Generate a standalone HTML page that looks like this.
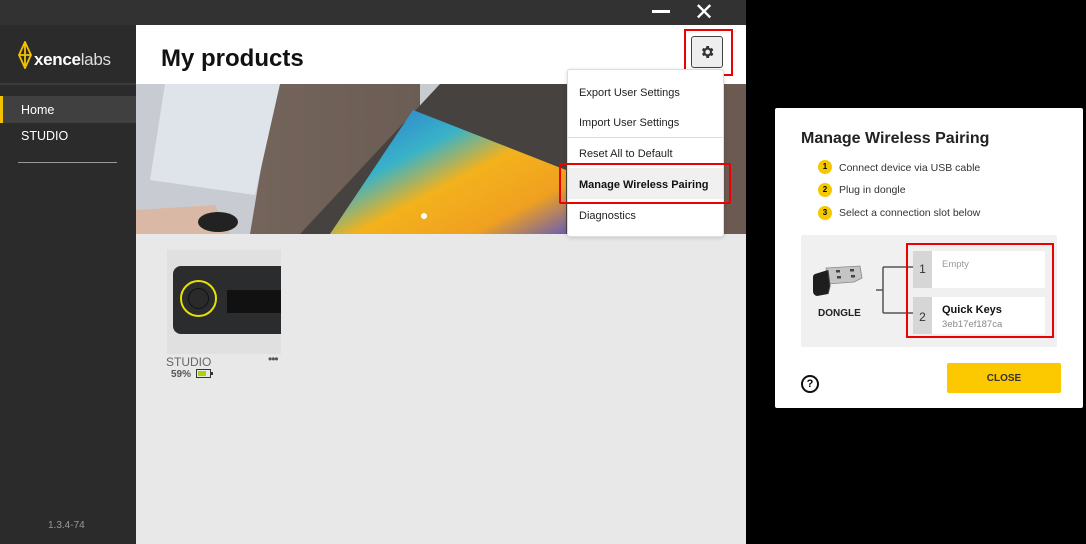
<!DOCTYPE html>
<html><head><meta charset="utf-8"><style>
*{margin:0;padding:0;box-sizing:border-box}
body{width:1086px;height:544px;background:#000;font-family:"Liberation Sans","DejaVu Sans",sans-serif;position:relative;overflow:hidden}
.abs{position:absolute}
</style></head><body>
<div class="abs" style="left:0;top:0;width:746px;height:544px;background:#2e2e2e"></div>
<div class="abs" style="left:0;top:0;width:746px;height:25px;background:#323232"></div>
<div class="abs" style="left:652px;top:10px;width:18px;height:3px;background:#fff"></div>
<div class="abs" style="left:694px;top:-2px;color:#fff;font-size:24px;font-weight:bold">✕</div>
<div class="abs" style="left:0;top:25px;width:136px;height:519px;background:#2b2b2b"></div>
<svg class="abs" style="left:17px;top:41px" width="16" height="28" viewBox="0 0 16 28"><path d="M8 1 L14 14 L8 27 L2 14 Z M8 1 L8 27 M2 14 L14 14" fill="none" stroke="#f2c200" stroke-width="1.8"/></svg>
<div class="abs" style="left:34px;top:50px;color:#fff;font-size:17px;letter-spacing:-0.3px"><b>xence</b><span style="color:#ddd">labs</span></div>
<div class="abs" style="left:0;top:83px;width:136px;height:2px;background:#3a3a3a"></div>
<div class="abs" style="left:0;top:96px;width:136px;height:27px;background:#404040"></div>
<div class="abs" style="left:0;top:96px;width:3px;height:27px;background:#f2c200"></div>
<div class="abs" style="left:21px;top:103px;color:#fff;font-size:12.5px">Home</div>
<div class="abs" style="left:21px;top:129px;color:#fff;font-size:12.5px">STUDIO</div>
<div class="abs" style="left:18px;top:162px;width:99px;height:1px;background:#999"></div>
<div class="abs" style="left:48px;top:520px;color:#999;font-size:10px">1.3.4-74</div>
<div class="abs" style="left:136px;top:25px;width:610px;height:519px;background:#e8e8e8"></div>
<div class="abs" style="left:136px;top:25px;width:610px;height:59px;background:#fff"></div>
<div class="abs" style="left:161px;top:45px;color:#111;font-size:24px;font-weight:bold">My products</div>
<svg class="abs" style="left:136px;top:84px" width="610" height="150" viewBox="136 84 610 150">
<defs>
<linearGradient id="wood" x1="0" y1="0" x2="1" y2="0"><stop offset="0" stop-color="#7a6a60"/><stop offset="1" stop-color="#5b4d47"/></linearGradient>
<linearGradient id="art" x1="0" y1="0" x2="1" y2="1"><stop offset="0" stop-color="#2a6fd0"/><stop offset="0.35" stop-color="#39b3c8"/><stop offset="0.55" stop-color="#f3b21c"/><stop offset="0.8" stop-color="#f0a020"/><stop offset="1" stop-color="#6a5fb0"/></linearGradient>
</defs>
<rect x="136" y="84" width="610" height="150" fill="url(#wood)"/>
<polygon points="136,84 275,84 250,234 136,234" fill="#c8ccd2"/>
<polygon points="165,84 280,84 255,195 150,180" fill="#dfe3ea"/>
<polygon points="136,210 215,205 230,234 136,234" fill="#d9b8a6"/>
<ellipse cx="218" cy="222" rx="20" ry="10" fill="#222"/>
<polygon points="420,84 480,84 475,125 420,120" fill="#c9cccf"/>
<polygon points="300,234 440,84 746,84 746,234" fill="#46423f"/>
<polygon points="330,234 413,110 566,170 566,234" fill="url(#art)"/>
<rect x="700" y="84" width="46" height="150" fill="#6b5a52"/>
<circle cx="424" cy="216" r="3" fill="#fff"/>
</svg>
<div class="abs" style="left:684px;top:29px;width:49px;height:47px;border:2px solid #e00"></div>
<div class="abs" style="left:691px;top:36px;width:32px;height:32px;border:1.5px solid #444;border-radius:3px;background:#eee"></div>
<svg class="abs" style="left:699px;top:44px" width="16" height="16" viewBox="0 0 24 24"><path fill="#333" d="M19.4 13a7.5 7.5 0 0 0 0-2l2.1-1.6-2-3.5-2.5 1a7.7 7.7 0 0 0-1.7-1L15 3h-4l-.4 2.9a7.7 7.7 0 0 0-1.7 1l-2.5-1-2 3.5L6.6 11a7.5 7.5 0 0 0 0 2l-2.1 1.6 2 3.5 2.5-1a7.7 7.7 0 0 0 1.7 1L11 21h4l.4-2.9a7.7 7.7 0 0 0 1.7-1l2.5 1 2-3.5zM13 15.5A3.5 3.5 0 1 1 13 8.5a3.5 3.5 0 0 1 0 7z"/></svg>
<div class="abs" style="left:567px;top:69px;width:157px;height:168px;background:#fff;border:1px solid #ddd;border-radius:3px;box-shadow:0 1px 4px rgba(0,0,0,.15)"></div>
<div class="abs" style="left:579px;top:87px;font-size:11px;color:#222">Export User Settings</div>
<div class="abs" style="left:579px;top:117px;font-size:11px;color:#222">Import User Settings</div>
<div class="abs" style="left:567px;top:137px;width:157px;height:1px;background:#ddd"></div>
<div class="abs" style="left:579px;top:148px;font-size:11px;color:#222">Reset All to Default</div>
<div class="abs" style="left:568px;top:168px;width:155px;height:31px;background:#f0f0f0"></div>
<div class="abs" style="left:579px;top:179px;font-size:11px;color:#111;font-weight:bold">Manage Wireless Pairing</div>
<div class="abs" style="left:559px;top:163px;width:172px;height:41px;border:2px solid #e00;border-radius:2px"></div>
<div class="abs" style="left:579px;top:210px;font-size:11px;color:#222">Diagnostics</div>
<div class="abs" style="left:167px;top:250px;width:114px;height:104px;background:#e0e0e0"></div>
<div class="abs" style="left:173px;top:266px;width:108px;height:68px;background:#2a2c2e;border-radius:8px 0 0 8px"></div>
<div class="abs" style="left:180px;top:280px;width:37px;height:37px;border:2px solid #e8e000;border-radius:50%"></div>
<div class="abs" style="left:188px;top:288px;width:21px;height:21px;border:1px solid #111;border-radius:50%;background:#2a2a2a"></div>
<div class="abs" style="left:227px;top:290px;width:54px;height:23px;background:#111"></div>
<div class="abs" style="left:166px;top:355px;font-size:12px;color:#666">STUDIO</div>
<div class="abs" style="left:268px;top:352px;font-size:12px;color:#555;letter-spacing:-1px">•••</div>
<div class="abs" style="left:171px;top:369px;font-size:10px;color:#555;font-weight:bold">59%</div>
<div class="abs" style="left:196px;top:369px;width:15px;height:9px;border:1.5px solid #333;padding:1px"><div style="width:8px;height:100%;background:#a8d20a"></div></div>
<div class="abs" style="left:211px;top:372px;width:2px;height:3px;background:#333"></div>
<div class="abs" style="left:775px;top:108px;width:308px;height:300px;background:#fff;border-radius:2px"></div>
<div class="abs" style="left:801px;top:130px;font-size:16px;font-weight:bold;color:#222">Manage Wireless Pairing</div>
<div class="abs" style="left:818px;top:160px;width:14px;height:14px;border-radius:50%;background:#f5c800;font-size:8px;font-weight:bold;text-align:center;line-height:14px">1</div>
<div class="abs" style="left:839px;top:162px;font-size:10.5px;color:#333">Connect device via USB cable</div>
<div class="abs" style="left:818px;top:183px;width:14px;height:14px;border-radius:50%;background:#f5c800;font-size:8px;font-weight:bold;text-align:center;line-height:14px">2</div>
<div class="abs" style="left:839px;top:184px;font-size:10.5px;color:#333">Plug in dongle</div>
<div class="abs" style="left:818px;top:206px;width:14px;height:14px;border-radius:50%;background:#f5c800;font-size:8px;font-weight:bold;text-align:center;line-height:14px">3</div>
<div class="abs" style="left:839px;top:207px;font-size:10.5px;color:#333">Select a connection slot below</div>
<div class="abs" style="left:801px;top:235px;width:256px;height:112px;background:#f0f0f0;border-radius:2px"></div>
<svg class="abs" style="left:812px;top:262px" width="56" height="40" viewBox="0 0 56 40"><path d="M14 6 L48 4 L50 16 L42 20 L16 22 Z" fill="#c4c4c4" stroke="#888" stroke-width="0.8"/><rect x="24" y="8" width="4" height="2.5" fill="#444"/><rect x="38" y="7" width="4" height="2.5" fill="#444"/><rect x="25" y="14" width="4" height="2.5" fill="#444"/><rect x="39" y="13" width="4" height="2.5" fill="#444"/><path d="M3 12 L16 8 L18 24 L16 32 L5 34 Q1 33 1 29 L1 15 Q1 13 3 12 Z" fill="#1e1e1e"/><path d="M16 8 L18 24 L16 32" fill="none" stroke="#444" stroke-width="1"/></svg>
<div class="abs" style="left:818px;top:308px;font-size:10px;font-weight:bold;color:#222">DONGLE</div>
<svg class="abs" style="left:875px;top:265px" width="40" height="50"><path d="M1 25 H8 M8 2 V48 M8 2 H38 M8 48 H38" fill="none" stroke="#555" stroke-width="1.5"/></svg>
<div class="abs" style="left:913px;top:251px;width:132px;height:37px;background:#fff"></div>
<div class="abs" style="left:913px;top:251px;width:19px;height:37px;background:#d6d6d6;font-size:12px;color:#333;text-align:center;line-height:37px">1</div>
<div class="abs" style="left:942px;top:259px;font-size:9.5px;color:#999">Empty</div>
<div class="abs" style="left:913px;top:297px;width:132px;height:37px;background:#fff"></div>
<div class="abs" style="left:913px;top:297px;width:19px;height:37px;background:#d6d6d6;font-size:12px;color:#333;text-align:center;line-height:41px">2</div>
<div class="abs" style="left:942px;top:304px;font-size:11px;font-weight:bold;color:#111">Quick Keys</div>
<div class="abs" style="left:942px;top:319px;font-size:9.5px;color:#888">3eb17ef187ca</div>
<div class="abs" style="left:906px;top:243px;width:148px;height:95px;border:2px solid #e00"></div>
<div class="abs" style="left:801px;top:375px;width:18px;height:18px;border:2px solid #111;border-radius:50%;font-size:11px;font-weight:bold;text-align:center;line-height:14px">?</div>
<div class="abs" style="left:947px;top:363px;width:114px;height:30px;background:#fcc800;border-radius:2px;font-size:10px;font-weight:bold;color:#333;text-align:center;line-height:32px">CLOSE</div>
</body></html>
